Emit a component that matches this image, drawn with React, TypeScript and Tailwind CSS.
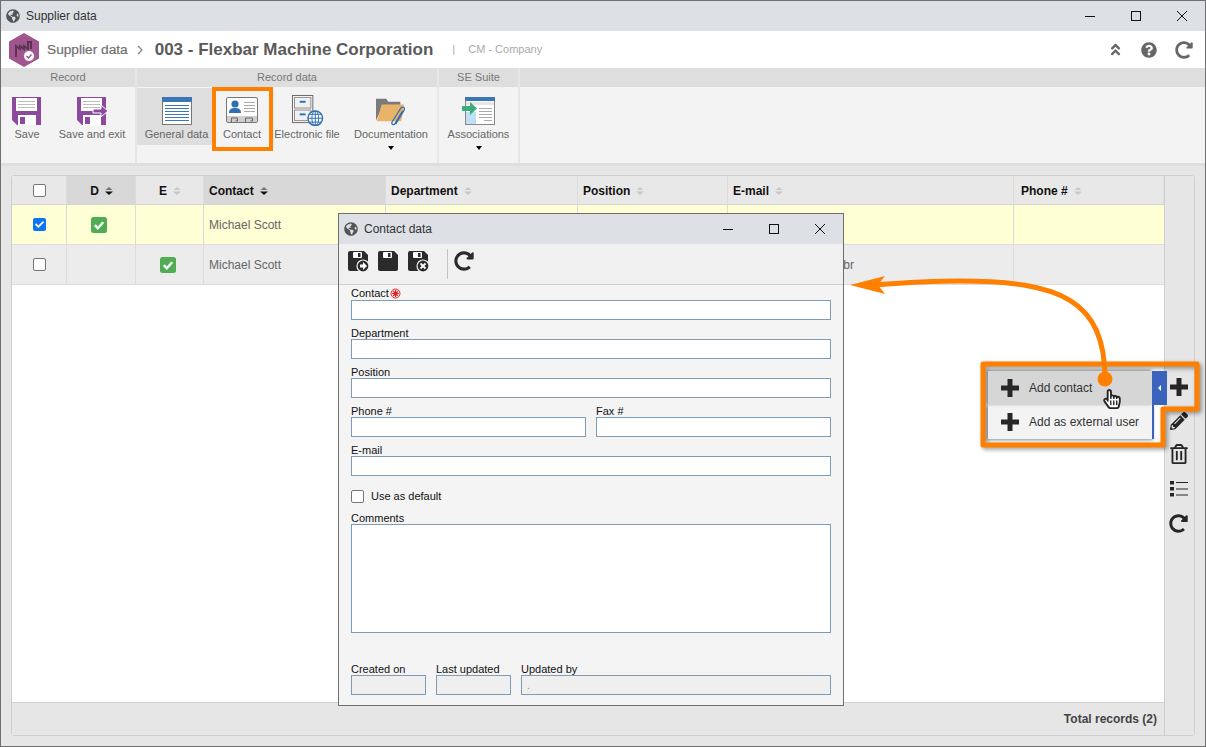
import type { ReactNode } from "react";
import {
  FaAngleDoubleUp,
  FaCheck,
  FaGlobeAmericas,
  FaHandPointer,
  FaPencilAlt,
  FaQuestionCircle,
  FaRedoAlt,
  FaRegHandPointer,
  FaRegTrashAlt,
} from "react-icons/fa";

const columns = [
  { key: "check", label: "", width: "w-[55px]" },
  { key: "d", label: "D", width: "w-[69px]", sorted: true, center: true },
  { key: "e", label: "E", width: "w-[68px]", center: true },
  { key: "contact", label: "Contact", width: "w-[182px]", sorted: true },
  { key: "department", label: "Department", width: "w-[192px]" },
  { key: "position", label: "Position", width: "w-[150px]" },
  { key: "email", label: "E-mail", width: "w-[286px]" },
  { key: "phone", label: "Phone #", width: "w-[150px]" },
];

function SortIcon({ active }: { active?: boolean }) {
  return (
    <svg width="10" height="10" viewBox="0 0 10 10" className="ml-[5px]">
      <path d="M5 1 8.5 4h-7z" fill={active ? "#777" : "#c8c8c8"} />
      <path d="M5 9 9 5.500H1z" fill={active ? "#111" : "#c8c8c8"} />
    </svg>
  );
}

function Checkbox({ checked }: { checked?: boolean }) {
  if (checked) {
    return (
      <span className="flex h-[13px] w-[13px] items-center justify-center rounded-[2px] bg-[#0a75f5] text-white">
        <FaCheck size={9} />
      </span>
    );
  }
  return <span className="block h-[13px] w-[13px] rounded-[2px] border border-[#767676] bg-white" />;
}

function GreenCheck() {
  return (
    <svg width="16" height="16" viewBox="0 0 16 16">
      <rect width="16" height="16" rx="2.500" fill="#50ad55" />
      <path d="m3.800 8.200 3 3 5.400-6" fill="none" stroke="#fff" strokeWidth="2.400" />
    </svg>
  );
}

function Cross({ className }: { className?: string }) {
  return (
    <svg width="18" height="18" viewBox="0 0 18 18" className={className}>
      <path d="M6.500 0h5v6.500H18v5h-6.500V18h-5v-6.500H0v-5h6.500z" fill="#262626" />
    </svg>
  );
}

function ListIcon({ className }: { className?: string }) {
  return (
    <svg width="18" height="16" viewBox="0 0 18 16" className={className}>
      <path d="M0 0h4v3.500H0zM0 6h4v3.500H0zM0 12h4v3.500H0z" fill="#262626" />
      <path d="M6 1.500h12M6 8h12M6 14h12" stroke="#262626" strokeWidth="1.200" />
    </svg>
  );
}

function FloppyPurple({ arrow }: { arrow?: boolean }) {
  return (
    <svg width="34" height="30" viewBox="0 0 34 30">
      <path d="M2 1h29v28H7l-5-5z" fill="#8c4a9e" />
      <rect x="6" y="2" width="21" height="13" fill="#fff" />
      <path d="M8 5.500h17M8 8.500h17M8 11.500h17" stroke="#bdbdbd" strokeWidth="1" />
      <rect x="8" y="19" width="18" height="10" fill="#fff" />
      <rect x="10" y="21" width="5" height="7" fill="#8c4a9e" />
      {arrow && <path d="M18 13h8V9l7 6-7 6v-4h-8z" fill="#8c4a9e" stroke="#fff" strokeWidth="1" />}
    </svg>
  );
}

function GeneralIcon() {
  return (
    <svg width="32" height="30" viewBox="0 0 32 30">
      <rect x="1.500" y="1.500" width="29" height="27" fill="#fff" stroke="#777" />
      <rect x="1" y="1" width="30" height="5" fill="#3d76b5" />
      <path d="M4 9.500h24M4 12.500h24M4 15.500h24M4 18.500h24M4 21.500h24M4 24.500h24" stroke="#3d76b5" />
    </svg>
  );
}

function ContactIcon() {
  return (
    <svg width="34" height="30" viewBox="0 0 34 30">
      <rect x="1.500" y="1.500" width="31" height="25" rx="1.500" fill="#fff" stroke="#777" />
      <rect x="2" y="20" width="30" height="6" fill="#cfcfcf" />
      <circle cx="10" cy="8" r="3.600" fill="#2f6fb0" />
      <path d="M4 17c0-4 2.500-5 6-5s6 1 6 5z" fill="#2f6fb0" />
      <path d="M19 6.500h11M19 9.500h11M19 12.500h11M19 15.500h11" stroke="#aaa" />
      <path d="M6.500 27v-5h6v3h-2M20.500 27v-5h7v3h-2" fill="none" stroke="#666" />
    </svg>
  );
}

function FileIcon() {
  return (
    <svg width="33" height="32" viewBox="0 0 34 33">
      <rect x="1.500" y="1.500" width="21" height="28" fill="#fff" stroke="#666" />
      <rect x="3.500" y="3.500" width="17" height="11" fill="#f0f0f0" stroke="#888" />
      <rect x="3.500" y="16.500" width="17" height="11" fill="#f0f0f0" stroke="#888" />
      <rect x="9" y="7" width="6" height="2" fill="#2f6fb0" />
      <rect x="9" y="20" width="6" height="2" fill="#2f6fb0" />
      <circle cx="25" cy="25" r="7.500" fill="#fff" stroke="#2f6fb0" strokeWidth="1.500" />
      <path d="M17.500 25h15M25 17.500v15M19 21h12M19 29h12" stroke="#2f6fb0" />
      <ellipse cx="25" cy="25" rx="3.500" ry="7.500" fill="none" stroke="#2f6fb0" />
    </svg>
  );
}

function FolderIcon() {
  return (
    <svg width="32" height="30" viewBox="0 0 34 32">
      <path d="M1 26V3h11l2 3h13v5H8z" fill="#7a7a7a" />
      <path d="M2 27 7 9h24l-3 18z" fill="#e9b46a" />
      <path d="M22 30 31 15c1.500-2.500-2-4.500-3.500-2L18 28c-1 2 2 3.500 3.200 1.500l8-13.500" fill="none" stroke="#2f6fb0" strokeWidth="1.300" />
    </svg>
  );
}

function AssociationsIcon() {
  return (
    <svg width="34" height="30" viewBox="0 0 34 30">
      <rect x="3.500" y="1.500" width="29" height="27" fill="#fff" stroke="#888" />
      <rect x="3" y="1" width="30" height="4" fill="#3d76b5" />
      <rect x="4" y="6" width="28" height="3" fill="#e6e6e6" />
      <rect x="4" y="16" width="10" height="12" fill="#bfe0f2" />
      <path d="M17 12.500h13M17 15.500h13M17 18.500h13M17 21.500h13M22 24.500h8" stroke="#aaa" />
      <path d="M0 10h8V6l7 6.500L8 19v-4H0z" fill="#3cae7c" />
    </svg>
  );
}

function RibbonItem({
  label,
  icon,
  width,
  caret,
  active,
}: {
  label: string;
  icon: ReactNode;
  width: string;
  caret?: boolean;
  active?: boolean;
}) {
  return (
    <div className={`flex shrink-0 flex-col items-center ${width}`}>
      <div className={`flex h-[57px] w-full flex-col items-center ${active ? "bg-[#dedede]" : ""}`}>
        <div className="flex h-[38px] items-end">{icon}</div>
        <span className="mt-[1px] whitespace-nowrap leading-[14px]">{label}</span>
      </div>
      {caret && <span className="mt-[1px] h-0 w-0 border-x-[3px] border-t-[4px] border-x-transparent border-t-black" />}
    </div>
  );
}

function RibbonGroup({ title, width, children }: { title: string; width: string; children: ReactNode }) {
  return (
    <div className={`flex shrink-0 flex-col border-r-2 border-[#e6e6e6] ${width}`}>
      <div className="flex h-[19px] items-center justify-center bg-[#dedede] text-[#777]">{title}</div>
      <div className="flex h-[76px] pt-[1px]">{children}</div>
    </div>
  );
}

function HeaderCell({ column }: { column: (typeof columns)[number] }) {
  return (
    <div
      className={`flex h-full shrink-0 items-center border-r border-[#dcdcdc] pt-[1px] ${column.width} ${
        column.sorted ? "bg-[#d8d8d8]" : ""
      } ${column.center || column.key === "check" ? "justify-center" : ""} ${
        column.center || column.key === "phone" ? "pl-[7px] pr-[5px]" : "px-[5px]"
      }`}
    >
      {column.key === "check" ? (
        <Checkbox />
      ) : (
        <>
          <span className="font-bold text-[#111]">{column.label}</span>
          <SortIcon active={column.sorted} />
        </>
      )}
    </div>
  );
}

function Row({
  bg,
  checked,
  defaultCol,
  email,
}: {
  bg: string;
  checked?: boolean;
  defaultCol: "d" | "e";
  email?: string;
}) {
  return (
    <div className={`flex h-[40px] border-b border-[#dcdcdc] ${bg}`}>
      <div className="flex w-[55px] shrink-0 items-center justify-center border-r border-[#dcdcdc]">
        <Checkbox checked={checked} />
      </div>
      <div className="flex w-[69px] shrink-0 items-center justify-center border-r border-[#dcdcdc] pr-[4px]">
        {defaultCol === "d" && <GreenCheck />}
      </div>
      <div className="flex w-[68px] shrink-0 items-center justify-center border-r border-[#dcdcdc] pr-[3px]">
        {defaultCol === "e" && <GreenCheck />}
      </div>
      <div className="flex w-[182px] shrink-0 items-center border-r border-[#dcdcdc] px-[5px] text-[#666]">
        Michael Scott
      </div>
      <div className="w-[192px] shrink-0 border-r border-[#dcdcdc]" />
      <div className="w-[150px] shrink-0 border-r border-[#dcdcdc]" />
      <div className="flex w-[286px] shrink-0 items-center border-r border-[#dcdcdc] pl-[3px] text-[#666]">{email}</div>
      <div className="w-[150px] shrink-0" />
    </div>
  );
}

function Field({ label, width, required, disabled, value }: { label: string; width: string; required?: boolean; disabled?: boolean; value?: string }) {
  return (
    <div className={`flex flex-col ${width}`}>
      <div className={`flex h-[13px] whitespace-nowrap text-[#111] ${required ? "items-end leading-[13px]" : "items-start leading-[15px]"}`}>
        {label}
        {required && (
          <svg width="11" height="11" viewBox="0 0 11 11" className="mb-[1px] ml-[1px]">
            <circle cx="5.500" cy="5.500" r="4.500" fill="#fff" stroke="#e02020" />
            <path d="M5.500 2v7M2 5.500h7M3 3l5 5M8 3l-5 5" stroke="#e02020" strokeWidth="1.200" />
          </svg>
        )}
      </div>
      <div
        className={`h-[20px] border border-[#7c9cb8] px-[5px] leading-[18px] text-[#c98a3c] ${
          disabled ? "bg-[#efefef]" : "bg-white"
        }`}
      >
        {value}
      </div>
    </div>
  );
}

function ToolbarFloppy({ badge }: { badge?: "add" | "close" }) {
  return (
    <svg width="22" height="22" viewBox="0 0 22 22">
      <path d="M1 3a2 2 0 0 1 2-2h14l4 4v14a2 2 0 0 1-2 2H3a2 2 0 0 1-2-2z" fill="#2b2b2b" />
      <rect x="6" y="2" width="9" height="6" rx="1" fill="#fff" />
      <rect x="11" y="3" width="2.500" height="4" fill="#2b2b2b" />
      {badge && <circle cx="16" cy="16" r="6" fill="#2b2b2b" stroke="#f0f0f0" strokeWidth="1.200" />}
      {badge === "add" && <path d="M13 14.500h3V12l4 4-4 4v-2.500h-3z" fill="#fff" />}
      {badge === "close" && <path d="m13.500 13.500 5 5m0-5-5 5" stroke="#fff" strokeWidth="1.800" />}
    </svg>
  );
}

function ContactDialog() {
  return (
    <div className="absolute left-[337px] top-[212px] flex h-[493px] w-[506px] flex-col border border-[#6f6f6f] bg-[#f4f4f4]">
      <div className="flex h-[30px] shrink-0 items-center bg-[#dde0e5] pl-[5px]">
        <FaGlobeAmericas size={14} className="text-[#555]" />
        <span className="ml-[6px] text-[12px] text-[#333]">Contact data</span>
        <WindowButtons className="ml-auto mr-[17px] gap-[34px]" />
      </div>
      <div className="flex h-[41px] shrink-0 items-center border-b border-[#cfcfcf] bg-[#f0f0f0] pb-[6px] pl-[8px]">
        <ToolbarFloppy badge="add" />
        <span className="ml-[8px]"><ToolbarFloppy /></span>
        <span className="ml-[8px]"><ToolbarFloppy badge="close" /></span>
        <span className="ml-[18px] mt-[6px] h-[30px] w-px bg-[#c4c4c4]" />
        <FaRedoAlt size={20} className="ml-[6px] text-[#2b2b2b]" />
      </div>
      <div className="flex flex-col gap-[6px] px-[12px] pt-[2px]">
        <Field label="Contact" width="w-full" required />
        <Field label="Department" width="w-full" />
        <Field label="Position" width="w-full" />
        <div className="flex gap-[10px]">
          <Field label="Phone #" width="w-[235px]" />
          <Field label="Fax #" width="w-[235px]" />
        </div>
        <Field label="E-mail" width="w-full" />
        <div className="mt-[6px] flex items-center gap-[7px] text-[#111]">
          <Checkbox />
          <span>Use as default</span>
        </div>
        <div className="mt-[1px] flex flex-col">
          <div className="h-[12px] leading-[12px] text-[#111]">Comments</div>
          <div className="h-[109px] border border-[#7c9cb8] bg-white" />
        </div>
        <div className="mt-[23px] flex gap-[10px]">
          <Field label="Created on" width="w-[75px]" disabled />
          <Field label="Last updated" width="w-[75px]" disabled />
          <Field label="Updated by" width="w-[310px]" disabled value="." />
        </div>
      </div>
    </div>
  );
}

function WindowButtons({ className }: { className: string }) {
  return (
    <div className={`flex items-center ${className}`}>
      <svg width="12" height="12" viewBox="0 0 12 12"><path d="M1 6.500h10" stroke="#111" /></svg>
      <svg width="12" height="12" viewBox="0 0 12 12"><rect x="1.500" y="1.500" width="9" height="9" fill="none" stroke="#111" /></svg>
      <svg width="12" height="12" viewBox="0 0 12 12"><path d="m1 1 10 10m0-10L1 11" stroke="#111" /></svg>
    </div>
  );
}

function AddMenu() {
  return (
    <div className="absolute left-[987px] top-[370px] w-[179px] text-[12px] text-[#333]">
      <div className="flex h-[34px]">
        <div className="flex w-[164px] items-center bg-[#d6d6d6] pl-[13px] shadow-[-1px_-1px_3px_rgba(0,0,0,0.45)]">
          <Cross />
          <span className="ml-[10px]">Add contact</span>
        </div>
        <div className="flex w-[15px] items-center justify-center bg-[#3a63bd]">
          <span className="h-0 w-0 border-y-[3px] border-r-[3px] border-y-transparent border-r-white" />
        </div>
      </div>
      <div className="flex h-[34px] w-[166px] items-center border-r-2 border-[#3a63bd] bg-[#f3f3f3] pl-[13px] shadow-[-1px_1px_3px_rgba(0,0,0,0.45)]">
        <Cross />
        <span className="ml-[10px]">Add as external user</span>
      </div>
    </div>
  );
}

export default function App() {
  return (
    <div className="relative flex h-[747px] w-[1206px] flex-col overflow-hidden border border-[#6f6f6f] bg-[#e6e6e6] text-[11px] font-['Liberation_Sans',Arial,sans-serif]">
      <div className="flex h-[30px] shrink-0 items-center bg-[#dde0e5] pl-[5px]">
        <FaGlobeAmericas size={14} className="text-[#555]" />
        <span className="ml-[6px] text-[12px] text-[#333]">Supplier data</span>
        <WindowButtons className="ml-auto mr-[17px] gap-[34px]" />
      </div>

      <div className="flex h-[37px] shrink-0 items-center bg-white pl-[7px]">
        <svg width="32" height="34" viewBox="0 0 32 34">
          <path d="M16 0 31 8.500v17L16 34 1 25.500v-17z" fill="#a0558f" />
          <path d="M8 24V13l4 3v-3l4 3v-3l4 3V9h3v7" fill="none" stroke="#5a3550" strokeWidth="2" />
          <circle cx="21" cy="23" r="5.500" fill="#fff" stroke="#a0558f" />
          <path d="m18.500 23 2 2 3-3.500" fill="none" stroke="#a0558f" strokeWidth="1.500" />
        </svg>
        <span className="ml-[7px] pt-[1px] text-[13.7px] text-[#707070] [-webkit-text-stroke:0.2px_#707070]">Supplier data</span>
        <svg width="8" height="10" viewBox="0 0 8 10" className="ml-[8px]"><path d="m2 1 4 4-4 4" fill="none" stroke="#888" strokeWidth="1.300" /></svg>
        <span className="ml-[11px] text-[17px] font-bold text-[#5a5a5a]">003 - Flexbar Machine Corporation</span>
        <span className="ml-[19px] text-[#aaa]">|</span>
        <span className="ml-[13px] text-[#aaa]">CM - Company</span>
        <div className="ml-auto mr-[12px] flex items-center gap-[18px] text-[#666]">
          <FaAngleDoubleUp size={15} />
          <FaQuestionCircle size={16} />
          <FaRedoAlt size={18} />
        </div>
      </div>

      <div className="flex shrink-0 bg-[#f3f3f3] text-[#666]">
        <RibbonGroup title="Record" width="w-[136px]">
          <RibbonItem label="Save" width="w-[52px]" icon={<FloppyPurple />} />
          <RibbonItem label="Save and exit" width="w-[78px]" icon={<FloppyPurple arrow />} />
        </RibbonGroup>
        <RibbonGroup title="Record data" width="w-[302px]">
          <RibbonItem label="General data" width="w-[79px]" active icon={<GeneralIcon />} />
          <RibbonItem label="Contact" width="w-[52px]" icon={<ContactIcon />} />
          <RibbonItem label="Electronic file" width="w-[78px]" icon={<FileIcon />} />
          <RibbonItem label="Documentation" width="w-[90px]" caret icon={<FolderIcon />} />
        </RibbonGroup>
        <RibbonGroup title="SE Suite" width="w-[81px]">
          <RibbonItem label="Associations" width="w-[79px]" caret icon={<AssociationsIcon />} />
        </RibbonGroup>
        <div className="flex-1">
          <div className="h-[19px] bg-[#dedede]" />
        </div>
      </div>
      <div className="h-[3px] shrink-0 bg-[#dedede]" />

      <div className="flex min-h-0 flex-1 flex-col px-[10px] pb-[10px] pt-[9px]">
        <div className="flex min-h-0 flex-1 rounded-[3px] border border-[#cfcfcf] text-[12px]">
          <div className="flex w-[1152px] shrink-0 flex-col bg-white">
            <div className="flex h-[29px] shrink-0 items-center border-b border-[#d4d4d4] bg-[#e8e8e8]">
              {columns.map((column) => (
                <HeaderCell key={column.key} column={column} />
              ))}
            </div>
            <Row bg="bg-[#ffffd5]" checked defaultCol="d" />
            <Row bg="bg-[#ececec]" defaultCol="e" email="mscott@flexbar.com.br" />
            <div className="flex-1" />
            <div className="flex h-[33px] shrink-0 items-center justify-end border-t border-[#cfcfcf] bg-[#e6e6e6] pr-[7px] font-bold text-[#444]">
              Total records (2)
            </div>
          </div>
          <div className="flex flex-1 flex-col items-center border-l border-[#cfcfcf] bg-[#e6e6e6] pr-[2px] pt-[202px] text-[#262626]">
            <Cross />
            <FaPencilAlt size={18} className="mt-[16px]" />
            <FaRegTrashAlt size={20} className="mt-[14px]" />
            <ListIcon className="mt-[17px]" />
            <FaRedoAlt size={19} className="mt-[17px]" />
          </div>
        </div>
      </div>

      <ContactDialog />

      <svg className="pointer-events-none absolute left-[-1px] top-[-1px] drop-shadow-[2px_2px_2px_rgba(0,0,0,0.4)]" width="1206" height="747" viewBox="0 0 1206 747">
        <path d="M983 364h214v45h-34v36h-180z" fill="none" stroke="#ff8000" strokeWidth="5" strokeLinejoin="round" />
      </svg>
      <AddMenu />
      <svg className="pointer-events-none absolute left-[-1px] top-[-1px]" width="1206" height="747" viewBox="0 0 1206 747">
        <rect x="214" y="89" width="57" height="60" fill="none" stroke="#ff8000" strokeWidth="4" />
        <path d="M1105 379C1105 300 1060 281 960 281 925 281 900 283 875 285" fill="none" stroke="#ff8000" strokeWidth="5" />
        <path d="M850 285 885 276 878 285 885 294z" fill="#ff8000" />
        <circle cx="1105" cy="379" r="7.500" fill="#ff8000" />
      </svg>
      <div className="absolute left-[1101px] top-[388px] text-white">
        <FaHandPointer size={20} />
        <FaRegHandPointer size={20} className="absolute left-0 top-0 text-[#222]" />
      </div>
    </div>
  );
}
